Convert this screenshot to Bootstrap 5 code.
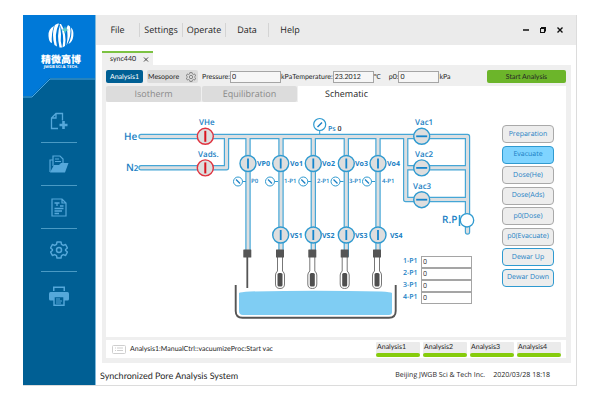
<!DOCTYPE html>
<html lang="en">
<head>
<meta charset="utf-8">
<meta name="viewport" content="width=device-width, initial-scale=1">
<title>Synchronized Pore Analysis System</title>
<link href="https://cdn.jsdelivr.net/npm/bootstrap@5.3.0/dist/css/bootstrap.min.css" rel="stylesheet">
<style>
  :root { --ink: #262626; --deep: #005f94; --line: #2f9ad0; --label: #1b7fc4; --panel: #efefef; }
  body { font-family: "Open Sans", "Noto Sans", sans-serif; font-size: 7px; line-height: 10px; color: var(--ink); background: #fff; text-rendering: geometricPrecision; }
  .page { min-height: 100vh; padding: 15px 23px 16px; }
  .app { border-right: 1px solid #dcdcdc; border-bottom: 1px solid #dcdcdc; }
  button, input { font: inherit; color: inherit; text-rendering: inherit; }

  .side { width: 73px; background: var(--deep); border-right: 1px solid #7fb9dc; }
  .brand { height: 84px; }
  .brand > * { grid-area: 1 / 1; }
  .brand-name { font-family: "Noto Sans CJK SC", sans-serif; font-weight: 900; font-size: 10px; line-height: 12px; color: #fff; }
  .brand-text { padding: 38px 0 0 4px; }
  .brand-sub { font-weight: 700; font-size: 4px; line-height: 5px; color: #fff; }
  .tools a { height: 43px; width: 36px; color: #55a8da; }
  .tools li + li a { border-top: 1px solid #4a9ac4; }
  .tools li:last-child a { height: 48px; }

  .topbar { height: 30px; background: #ebebeb; }
  .menu a { width: 43px; font-size: 9px; line-height: 14px; color: var(--ink); }
  .menu li + li a { border-left: 1px solid #d4d4d4; }
  .winctl button { width: 17px; height: 16px; }

  .work { padding: 6px 5px 0 6px; }
  .doc-tab { width: 51px; height: 14px; border-top: 2px solid #7cc242; background: var(--panel); padding-left: 8px; }
  .panel { background: var(--panel); padding: 5px 5px 5px 4px; }
  .bar { height: 13px; margin-bottom: 3px; }
  .narrow { font-family: Lato, "Open Sans", sans-serif; }
  .pill { height: 13px; border: 0; border-radius: 2px; font-size: 7px; line-height: 10px; padding: 0; }
  .pill-main { width: 37px; background: var(--deep); color: #fff; }
  .pill-mode { width: 51px; background: #dcdcdc; margin-left: 4px; padding: 0 2px 0 1px; }
  .pill-go { width: 79px; background: #6cb52a; }
  .field { border: 1px solid #a5a5a5; border-radius: 0; height: 12px; padding: 0 0 0 1px; background: #f6f6f6; min-width: 0; }
  .w-50px { width: 51px; }
  .w-41px { width: 41px; }
  .lbl-end { text-align: right; white-space: nowrap; }
  .sub-tabs { height: 16px; }
  .sub-tabs button { border: 0; font-size: 9px; line-height: 14px; padding: 0; width: 95px; height: 16px; background: #dcdcdc; color: #8a8a8a; border-radius: 2px; margin-right: 1px; }
  .sub-tabs .on { flex-grow: 1; background: #fff; color: var(--ink); text-align: left; padding-left: 27px; margin: 0; border-radius: 0; }
  .board { background: #fff; padding-right: 12px; }
  .plant { display: grid; }
  .plant > * { grid-area: 1 / 1; }
  .plant svg text { fill: var(--label); }
  .reads { width: 69px; margin: 0 8px 33px 0; }
  .reads label { color: var(--label); font-size: 7px; font-weight: 600; width: 18px; }
  .reads .field { background: #fff; flex: 1; height: 12px; }
  .cmds { width: 52px; height: 162px; margin-top: 23px; }
  .cmd { height: 18px; border: 1px solid #a9a9a9; border-radius: 4px; background: #ededed; color: var(--label); font-size: 7px; line-height: 10px; padding: 1px 0 0; white-space: nowrap; }
  .cmd-on { background: #7fd4ff; border-color: var(--line); }
  .cmd-edge { border-color: var(--line); }
  .status { background: #fff; margin-top: 3px; height: 18px; padding: 0 5px 0 6px; }
  .slots { gap: 3px; }
  .slot { width: 44px; background: #ebebeb; border-radius: 1px; padding-left: 1px; line-height: 11px; }
  .slot::after { content: ""; display: block; height: 4px; margin-left: -1px; background: #86cc0c; border-radius: 2px; }
  .foot { height: 22px; padding: 8px 26px 0 4px; }
  .foot-title { font-size: 9px; }
</style>
<script src="https://cdn.jsdelivr.net/npm/bootstrap@5.3.0/dist/js/bootstrap.bundle.min.js"></script>
</head>
<body>
<div class="page d-flex">
<div class="app d-flex flex-grow-1">

  <aside class="side flex-shrink-0">
    <div class="brand d-grid">
      <svg width="72" height="84" viewBox="0 0 72 84" aria-hidden="true">
        <path d="M0 0H72V63H27L9 81H0Z" fill="#0079d8"/>
        <path d="M0 82H9L27 64H72" fill="none" stroke="#4aa8e6"/>
        <g fill="#fff">
          <path d="M31 11Q25 14 25.500 21T29 28Q28 19 31 11Z"/>
          <path d="M36 8.500Q32 9 31.500 11Q28.500 20 31.500 30L34 31.500Q31 19 36 8.500Z"/>
          <path d="M37 10Q33.500 20 36.500 32.500L39 32.500Q37 26 38 19Z"/>
          <path d="M38 9Q44 18 42 31L39.500 32.500Q42 20 36.500 9Z"/>
          <path d="M45 10L47 11.500Q49 20 43.500 30.500Q45.500 20 43.500 13Z"/>
          <path d="M48 12.500Q51 15 50.300 21T45.500 29Q49.500 21 48 12.500Z"/>
        </g>
        <path d="M42 11l1 3 3 1-3 1-1 3-1-3-3-1 3-1z" fill="#5ecdc8"/>
      </svg>
      <div class="brand-text d-flex flex-column align-items-center">
        <span class="brand-name">精微高博</span>
        <span class="brand-sub">JWGB SCI.&amp; TECH.</span>
      </div>
    </div>
    <ul class="tools list-unstyled m-0 d-flex flex-column align-items-center">
      <li><a href="#" aria-label="New" class="d-flex align-items-center justify-content-center">
        <svg width="18" height="18" viewBox="0 0 18 18" fill="none" stroke="currentColor" stroke-width="1.3"><path d="M8 16.500H1.500V6L6 1.500H12.500V8.500M1.500 6H6V1.500"/><path d="M13.500 9v8M9.500 13h8" stroke-width="2.600"/></svg></a></li>
      <li><a href="#" aria-label="Open" class="d-flex align-items-center justify-content-center">
        <svg width="20" height="18" viewBox="0 0 20 18" fill="none" stroke="currentColor" stroke-width="1.200"><path d="M1 17V5H4M4 11V1H11L14 4V8M6 4H10M6 6.500H12"/><path d="M1 17.500L5 10H10L12 8H19.500L16 17.500Z" fill="currentColor" stroke="none"/></svg></a></li>
      <li><a href="#" aria-label="Report" class="d-flex align-items-center justify-content-center">
        <svg width="16" height="19" viewBox="0 0 16 19" fill="none" stroke="currentColor" stroke-width="1.200"><path d="M1 1H11L15 5V18H1ZM11 1V5H15"/><path d="M3.500 5H8.500M6 5V8M9 8H12.500M3.500 10.500H12.500M3.500 13H11M3.500 15.500H8" stroke-width="1.300"/></svg></a></li>
      <li><a href="#" aria-label="Settings" class="d-flex align-items-center justify-content-center">
        <svg width="18" height="18" viewBox="0 0 18 18" fill="none" stroke="currentColor" stroke-width="1.500" stroke-linejoin="round"><path d="M7 1H11L11.500 3.400L13.300 4.400L15.600 3.500L17.400 7L15.600 8.500V9.500L17.400 11L15.600 14.500L13.300 13.600L11.500 14.600L11 17H7L6.500 14.600L4.700 13.600L2.400 14.500L.600 11L2.400 9.500V8.500L.600 7L2.400 3.500L4.700 4.400L6.500 3.400Z"/><circle cx="9" cy="9" r="2.500"/></svg></a></li>
      <li><a href="#" aria-label="Print" class="d-flex align-items-center justify-content-center">
        <svg width="20" height="20" viewBox="0 0 20 20"><path d="M4 5V0.500H16V5H14.500V2H5.500V5Z" fill="currentColor"/><rect y="6" width="20" height="8.500" rx="1.500" fill="currentColor"/><path d="M5 10.500H15V19.300H5Z" fill="#005f94" stroke="currentColor" stroke-width="1.400"/><path d="M7 13H11M7 15H13M7 17H12" stroke="currentColor" stroke-width="1.200"/></svg></a></li>
    </ul>
  </aside>

  <div class="flex-grow-1 d-flex flex-column">
    <header class="topbar d-flex align-items-center justify-content-between">
      <nav aria-label="Main">
        <ul class="menu list-unstyled d-flex m-0">
          <li><a href="#" class="d-block text-center text-decoration-none">File</a></li>
          <li><a href="#" class="d-block text-center text-decoration-none">Settings</a></li>
          <li><a href="#" class="d-block text-center text-decoration-none">Operate</a></li>
          <li><a href="#" class="d-block text-center text-decoration-none">Data</a></li>
          <li><a href="#" class="d-block text-center text-decoration-none">Help</a></li>
        </ul>
      </nav>
      <div class="winctl d-flex pe-2">
        <button type="button" aria-label="Minimize" class="border-0 bg-transparent p-0 d-flex align-items-center justify-content-center"><svg width="6" height="6" viewBox="0 0 6 6"><path d="M0 3H6" stroke="#111" stroke-width="1.500"/></svg></button>
        <button type="button" aria-label="Restore" class="border-0 bg-transparent p-0 d-flex align-items-center justify-content-center"><svg width="6" height="6" viewBox="0 0 6 6" fill="none" stroke="#111"><path d="M.500 1.500H4.500V5.500H.500ZM1 .500H5.500V4.500" stroke-width="1.100"/></svg></button>
        <button type="button" aria-label="Close" class="border-0 bg-transparent p-0 d-flex align-items-center justify-content-center"><svg width="6" height="6" viewBox="0 0 6 6"><path d="M.500 .500L5.500 5.500M5.500 .500L.500 5.500" stroke="#111" stroke-width="1.400"/></svg></button>
      </div>
    </header>

    <main class="work flex-grow-1 d-flex flex-column">
      <div class="doc-tab narrow d-flex align-items-center">
        <span>sync440</span>
        <button type="button" aria-label="Close sync440" class="border-0 bg-transparent p-0 ms-auto me-1 d-flex"><svg width="6" height="5" viewBox="0 0 6 5"><path d="M1 .500L5 4.500M5 .500L1 4.500" stroke="#333" stroke-width=".900"/></svg></button>
      </div>
      <div class="panel flex-grow-1 d-flex flex-column">
        <div class="bar narrow d-flex align-items-center">
          <button type="button" class="pill pill-main">Analysis1</button>
          <button type="button" class="pill pill-mode d-flex align-items-center justify-content-between"><span>Mesopore</span>
            <svg width="10" height="10" viewBox="0 0 18 18" fill="none" stroke="#777" stroke-width="1.500"><path d="M7 1H11L11.500 3.400L13.300 4.400L15.600 3.500L17.400 7L15.600 8.500V9.500L17.400 11L15.600 14.500L13.300 13.600L11.500 14.600L11 17H7L6.500 14.600L4.700 13.600L2.400 14.500L.600 11L2.400 9.500V8.500L.600 7L2.400 3.500L4.700 4.400L6.500 3.400Z"/><circle cx="9" cy="9" r="3"/></svg></button>
          <label for="pres" class="lbl-end ms-1">Pressure:</label><input id="pres" class="field w-50px" value="0"><span>kPa</span>
          <label for="temp" class="lbl-end">Temperature:</label><input id="temp" class="field w-41px" value="23.2012"><span>℃</span>
          <label for="p0" class="lbl-end ms-2">p0:</label><input id="p0" class="field w-41px" value="0"><span>kPa</span>
          <button type="button" class="pill pill-go ms-auto">Start Analysis</button>
        </div>
        <div class="sub-tabs d-flex" role="tablist">
          <button type="button" role="tab">Isotherm</button>
          <button type="button" role="tab">Equilibration</button>
          <button type="button" role="tab" class="on" aria-selected="true">Schematic</button>
        </div>
        <section class="board flex-grow-1 d-flex justify-content-between">
          <div class="plant">
            <svg width="374" height="235" viewBox="106 102 374 235" role="img" aria-label="Gas manifold">
              <defs>
                <g id="gauge"><circle r="4.500" fill="#fff" stroke="#2f9ad0"/><path d="M-2-2L2 2" stroke="#1b7fc4" stroke-width="1.300"/><path d="M4.500 0H8" stroke="#2f9ad0"/></g>
                <g id="vopen"><circle r="8" fill="#dedede" stroke="#2f9ad0" stroke-width="1.400"/><path d="M0-5V5" stroke="#1585cc" stroke-width="1.800"/></g>
                <g id="vshut"><circle r="8" fill="#dedede" stroke="#e0323f" stroke-width="1.400"/><path d="M0-5.500V5.500" stroke="#d9141f" stroke-width="2"/></g>
                <g id="vac"><circle r="8" fill="#dedede" stroke="#2f9ad0" stroke-width="1.400"/><path d="M-5.500 0H5.500" stroke="#1585cc" stroke-width="1.800"/></g>
                <g id="tube"><path d="M-2.500 0V14Q-4.500 16-4.500 18V27Q-4.500 31.500 0 31.500T4.500 27V18Q4.500 16 2.500 14V0" fill="#fff" stroke="#777"/><rect x="-2.500" y="16" width="5" height="13.500" rx="1.500" fill="#4f4f4f"/><rect x="-4" y="-7.500" width="8" height="8" rx=".500" fill="#555"/></g>
                <path id="pipes" d="M141 136.500H467.500M141 167.700H226.500V136.500M248 136.500V250M281 136.500V255M313.300 136.500V255M346.300 136.500V255M378 136.500V255M405.700 136.500V199.500H467.500M405.700 167.700H467.500M467.500 136.500V232"/>
              </defs>
              <g fill="none" stroke-linecap="round" stroke-linejoin="round">
                <use href="#pipes" stroke="#45a6d6" stroke-width="5.400"/>
                <use href="#pipes" stroke="#dcdfe1" stroke-width="3"/>
              </g>
              <use href="#vshut" x="205.300" y="136.300"/><use href="#vshut" x="205.300" y="167.900"/>
              <use href="#vopen" x="248" y="163.500"/><use href="#vopen" x="280.700" y="163.500"/><use href="#vopen" x="313.300" y="163.500"/><use href="#vopen" x="346.300" y="163.500"/><use href="#vopen" x="378" y="163.500"/>
              <use href="#vopen" x="280.700" y="235"/><use href="#vopen" x="313.300" y="235"/><use href="#vopen" x="346.300" y="235"/><use href="#vopen" x="378" y="235"/>
              <use href="#vac" x="421.700" y="136.300"/><use href="#vac" x="421.700" y="167.900"/><use href="#vac" x="421.700" y="199.700"/>
              <use href="#gauge" x="238" y="181.500"/><use href="#gauge" x="270" y="181.500"/><use href="#gauge" x="303.300" y="181.500"/><use href="#gauge" x="335.500" y="181.500"/><use href="#gauge" x="367" y="181.500"/>
              <circle cx="319.700" cy="124.500" r="6" fill="#fff" stroke="#2f9ad0" stroke-width="1.200"/><path d="M317.500 127L322 122.500" stroke="#1b7fc4" stroke-width="1.500"/><path d="M319.700 130.500V134" stroke="#2f9ad0"/>
              <path d="M459.500 215V226" stroke="#2f9ad0" stroke-width="1.500"/><circle cx="467" cy="220.300" r="6.700" fill="#fff" stroke="#2f9ad0" stroke-width="1.300"/>
              <path d="M247.300 256V288" stroke="#555" stroke-width="1.800"/><rect x="243.300" y="249.500" width="8" height="8" rx=".500" fill="#555"/>
              <use href="#tube" x="280" y="257"/><use href="#tube" x="312.300" y="257"/><use href="#tube" x="344.700" y="257"/><use href="#tube" x="377" y="257"/>
              <path d="M239 293Q240 292 250 291.500Q315 290 381 291.500Q391 292 392 293V312Q392 315 389 315H243Q239 315 239 311Z" fill="#7fcdf3"/>
              <path d="M235.700 285V311Q235.700 317.700 242.500 317.700H389Q395.700 317.700 395.700 311V285" fill="none" stroke="#555" stroke-width="1.900"/>
              <g font-size="8" font-weight="600">
                <text x="199" y="125">VHe</text><text x="198" y="157">Vads.</text>
                <text x="415" y="125">Vac1</text><text x="415" y="157">Vac2</text><text x="413" y="189">Vac3</text>
              </g>
              <g font-size="10" font-weight="600"><text x="124" y="140">He</text><text x="126" y="171">N<tspan font-size="8">2</tspan></text><text x="442" y="223">R.P</text></g>
              <g font-size="7" font-weight="700">
                <text x="257" y="166">VP0</text><text x="290" y="166">Vo1</text><text x="322" y="166">Vo2</text><text x="355" y="166">Vo3</text><text x="387" y="166">Vo4</text>
                <text x="290" y="238">VS1</text><text x="322" y="238">VS2</text><text x="355" y="238">VS3</text><text x="390" y="238">VS4</text>
              </g>
              <g font-size="6" font-weight="600">
                <text x="251" y="183">P0</text><text x="284" y="183">1-P1</text><text x="317" y="183">2-P1</text><text x="349" y="183">3-P1</text><text x="382" y="183">4-P1</text>
              </g>
              <text x="328" y="131" font-size="7" font-weight="600">Ps <tspan fill="#262626">0</tspan></text>
            </svg>
            <div class="reads align-self-end ms-auto">
              <div class="d-flex align-items-center"><label for="r1">1-P1</label><input id="r1" class="field" value="0"></div>
              <div class="d-flex align-items-center"><label for="r2">2-P1</label><input id="r2" class="field" value="0"></div>
              <div class="d-flex align-items-center"><label for="r3">3-P1</label><input id="r3" class="field" value="0"></div>
              <div class="d-flex align-items-center"><label for="r4">4-P1</label><input id="r4" class="field" value="0"></div>
            </div>
          </div>
          <div class="cmds d-flex flex-column justify-content-between">
            <button type="button" class="cmd">Preparation</button>
            <button type="button" class="cmd cmd-on">Evacuate</button>
            <button type="button" class="cmd">Dose(He)</button>
            <button type="button" class="cmd">Dose(Ads)</button>
            <button type="button" class="cmd">p0(Dose)</button>
            <button type="button" class="cmd">p0(Evacuate)</button>
            <button type="button" class="cmd cmd-edge">Dewar Up</button>
            <button type="button" class="cmd cmd-edge">Dewar Down</button>
          </div>
        </section>
        <div class="status narrow d-flex align-items-center">
          <svg width="14" height="9" viewBox="0 0 14 9" fill="none" stroke="#cfcfcf"><rect x=".500" y=".500" width="13" height="8" rx="1"/><path d="M3 3H4M5 3H11M3 5.500H4M5 5.500H11"/></svg>
          <span class="ms-1">Analysis1:ManualCtrl::vacuumizeProc:Start vac</span>
          <div class="slots d-flex ms-auto">
            <div class="slot">Analysis1</div><div class="slot">Analysis2</div><div class="slot">Analysis3</div><div class="slot">Analysis4</div>
          </div>
        </div>
      </div>
    </main>
    <footer class="foot d-flex justify-content-between">
      <span class="foot-title narrow">Synchronized Pore Analysis System</span>
      <span class="d-flex gap-2"><span>Beijing JWGB Sci &amp; Tech Inc.</span><span>2020/03/28 18:18</span></span>
    </footer>
  </div>
</div>
</div>
</body>
</html>
